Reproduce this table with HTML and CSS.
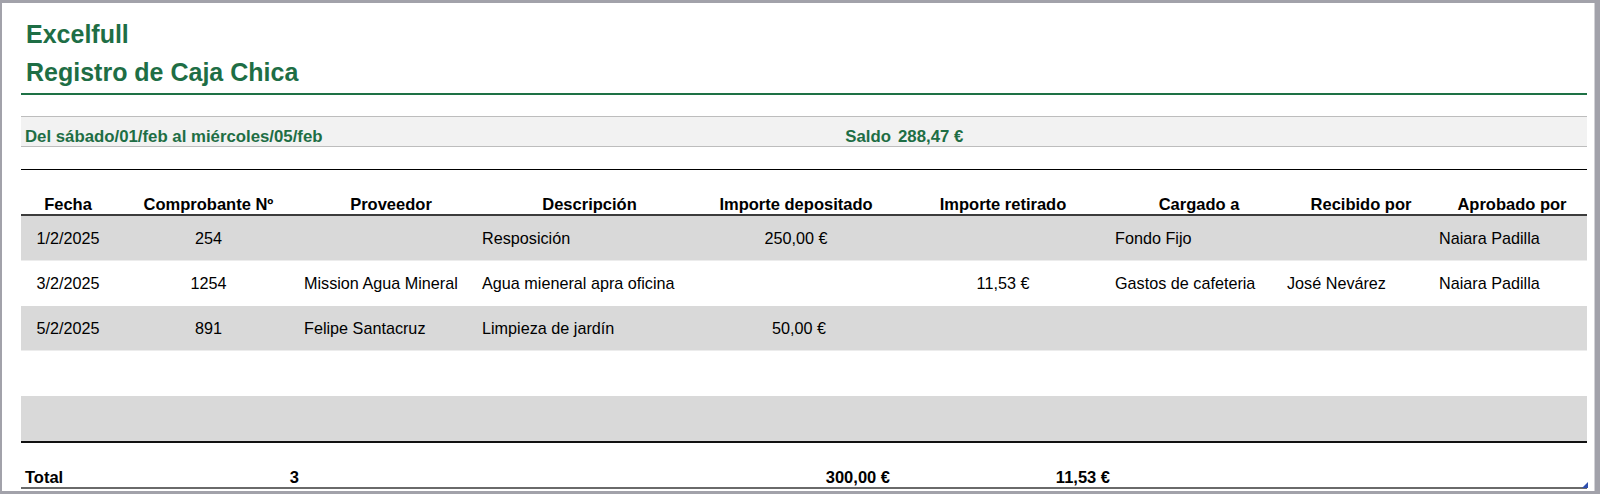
FILE: index.html
```html
<!DOCTYPE html>
<html lang="es">
<head>
<meta charset="utf-8">
<title>Registro de Caja Chica</title>
<link rel="stylesheet" href="styles.css">
</head>
<body>
<div class="sheet">
  <div class="title">Excelfull</div>
  <div class="subtitle">Registro de Caja Chica</div>
  <div class="gap"></div>
  <div class="grid band">
    <div class="period">Del sábado/01/feb al miércoles/05/feb</div>
    <div class="saldo-label">Saldo</div>
    <div class="saldo-val">288,47 €</div>
  </div>
  <div class="gap gap2"></div>
  <div class="grid head">
    <div>Fecha</div>
    <div>Comprobante Nº</div>
    <div>Proveedor</div>
    <div>Descripción</div>
    <div>Importe depositado</div>
    <div>Importe retirado</div>
    <div>Cargado a</div>
    <div>Recibido por</div>
    <div>Aprobado por</div>
  </div>
  <div class="grid row alt">
    <div class="c">1/2/2025</div>
    <div class="c">254</div>
    <div class="l"></div>
    <div class="l">Resposición</div>
    <div class="c">250,00 €</div>
    <div class="c"></div>
    <div class="l">Fondo Fijo</div>
    <div class="l"></div>
    <div class="l">Naiara Padilla</div>
  </div>
  <div class="grid row">
    <div class="c">3/2/2025</div>
    <div class="c">1254</div>
    <div class="l">Mission Agua Mineral</div>
    <div class="l">Agua mieneral apra oficina</div>
    <div class="c"></div>
    <div class="c">11,53 €</div>
    <div class="l">Gastos de cafeteria</div>
    <div class="l">José Nevárez</div>
    <div class="l">Naiara Padilla</div>
  </div>
  <div class="grid row alt">
    <div class="c">5/2/2025</div>
    <div class="c">891</div>
    <div class="l">Felipe Santacruz</div>
    <div class="l">Limpieza de jardín</div>
    <div class="c dep50">50,00 €</div>
    <div class="c"></div>
    <div class="l"></div>
    <div class="l"></div>
    <div class="l"></div>
  </div>
  <div class="grid row"></div>
  <div class="grid row alt last"></div>
  <div class="grid total">
    <div class="l">Total</div>
    <div class="r">3</div>
    <div></div>
    <div></div>
    <div class="r">300,00 €</div>
    <div class="r">11,53 €</div>
    <div></div>
    <div></div>
    <div></div>
    <span class="handle"></span>
  </div>
</div>
</body>
</html>
```
FILE: styles.css
```css
* { box-sizing: border-box; }

html, body {
  margin: 0;
  padding: 0;
}

body {
  background: #a2a2aa;
  width: 1600px;
  height: 494px;
  overflow: hidden;
  font-family: "Liberation Sans", Arial, sans-serif;
  color: #000;
}

.sheet {
  margin: 3px 0 0 2px;
  width: 1593px;
  height: 488px;
  background: #fff;
  padding-left: 19px;
  border-right: 1px solid #d2d2d6;
}

.title,
.subtitle {
  display: flex;
  align-items: flex-end;
  font-size: 25px;
  font-weight: bold;
  line-height: 1.15;
  color: #1e6e45;
  padding-left: 5px;
  width: 1566px;
  white-space: nowrap;
}

.title {
  height: 52px;
  padding-bottom: 6px;
}

.subtitle {
  height: 40px;
  padding-bottom: 6px;
  border-bottom: 2px solid #1e7145;
}

.gap {
  height: 21px;
}

.gap2 {
  height: 22px;
}

.grid {
  display: grid;
  grid-template-columns: 94px 187px 178px 219px 194px 220px 172px 152px 150px;
  width: 1566px;
  position: relative;
}

.band {
  height: 31px;
  background: #f2f2f2;
  border-top: 1px solid #bdbdbd;
  border-bottom: 1px solid #bdbdbd;
  font-size: 16.8px;
  font-weight: bold;
  line-height: 1.15;
  color: #1e6e45;
  align-items: end;
}

.period {
  grid-column: 1 / 5;
  padding-left: 4px;
  white-space: nowrap;
}

.saldo-label {
  grid-column: 5;
  text-align: right;
  padding-right: 2px;
}

.saldo-val {
  grid-column: 6;
  padding-left: 5px;
  white-space: nowrap;
}

.head {
  height: 47px;
  border-top: 1px solid #000;
  border-bottom: 2px solid #3c3c3c;
  font-size: 16.5px;
  font-weight: bold;
  line-height: 1.15;
  align-items: end;
  text-align: center;
}

.head > div {
  white-space: nowrap;
}

.row {
  height: 45px;
  font-size: 16.2px;
  line-height: 1.15;
  align-items: center;
}

.row.alt {
  background: #d9d9d9;
  border-bottom: 1px solid #ececec;
}

.row.alt.last {
  border-bottom: none;
}

.row > div,
.total > div {
  white-space: nowrap;
}

.c { text-align: center; }
.l { text-align: left; padding-left: 2px; }
.r { text-align: right; padding-right: 3px; }

.dep50 { padding-left: 6px; }

.total {
  height: 48px;
  border-top: 2px solid #111;
  border-bottom: 2px solid #6a6a6a;
  font-size: 16.5px;
  font-weight: bold;
  line-height: 1.15;
  align-items: end;
}

.total .l { padding-left: 4px; }

.handle {
  position: absolute;
  right: -1px;
  bottom: -1px;
  width: 6px;
  height: 6px;
  background: #2f4fae;
  clip-path: polygon(100% 0, 100% 100%, 0 100%);
}
```
